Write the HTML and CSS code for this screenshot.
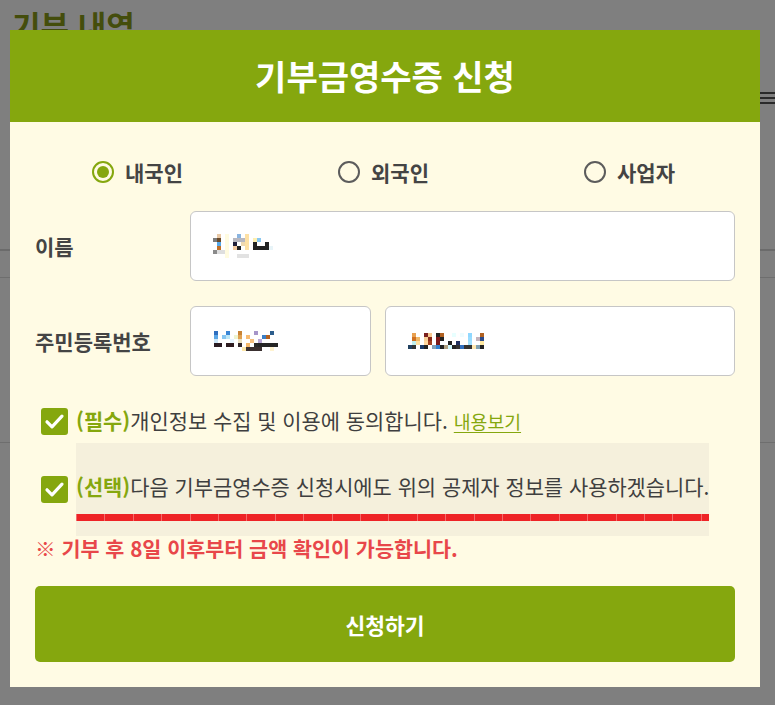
FILE: index.html
```html
<!DOCTYPE html>
<html lang="ko">
<head>
<meta charset="utf-8">
<title>기부금영수증 신청</title>
<link rel="stylesheet" href="styles.css">
</head>
<body>
<div class="page">
  <h1 class="page-title">기부 내역</h1>
  <div class="toolbar">
    <div class="menu-btn"><span></span><span></span><span></span></div>
  </div>
  <div class="rule rule-thick"></div>
  <div class="rule rule-a"></div>
  <div class="rule rule-b"></div>
</div>

<div class="overlay">
  <div class="modal">
    <header class="modal-head">
      <h2 class="modal-title">기부금영수증 신청</h2>
    </header>
    <div class="modal-body">
      <div class="radios">
        <label class="radio"><span class="radio-dot checked"></span>내국인</label>
        <label class="radio"><span class="radio-dot"></span>외국인</label>
        <label class="radio"><span class="radio-dot"></span>사업자</label>
      </div>

      <div class="form-grid">
        <div class="field-label">이름</div>
        <div class="input input-wide">
          <svg class="mosaic" width="60" height="24" viewBox="0 0 60 24">
            <rect x="0" y="4" width="4" height="4" fill="#7c7c7c"/>
            <rect x="4" y="0" width="4" height="4" fill="#e9c9a6"/>
            <rect x="4" y="4" width="4" height="4" fill="#6a4a2a"/>
            <rect x="4" y="8" width="4" height="4" fill="#56a8e8"/>
            <rect x="4" y="12" width="4" height="4" fill="#c07028"/>
            <rect x="0" y="16" width="4" height="4" fill="#8a8a8a"/>
            <rect x="4" y="16" width="8" height="4" fill="#dedede"/>
            <rect x="12" y="0" width="4" height="24" fill="#fffbe0"/>
            <rect x="20" y="4" width="12" height="4" fill="#b8b8c0"/>
            <rect x="24" y="0" width="4" height="4" fill="#8ab4e0"/>
            <rect x="20" y="8" width="4" height="4" fill="#20203a"/>
            <rect x="28" y="8" width="4" height="4" fill="#eed8b0"/>
            <rect x="20" y="12" width="4" height="4" fill="#f2caa0"/>
            <rect x="24" y="12" width="4" height="4" fill="#222"/>
            <rect x="32" y="0" width="4" height="16" fill="#fde0a4"/>
            <rect x="24" y="20" width="12" height="4" fill="#e2e2e2"/>
            <rect x="40" y="4" width="4" height="4" fill="#fff0b0"/>
            <rect x="44" y="4" width="4" height="4" fill="#8ac8f0"/>
            <rect x="40" y="8" width="4" height="8" fill="#222"/>
            <rect x="44" y="12" width="12" height="4" fill="#222"/>
            <rect x="52" y="8" width="4" height="4" fill="#222"/>
            <rect x="56" y="12" width="4" height="4" fill="#e8f4f8"/>
          </svg>
        </div>

        <div class="field-label">주민등록번호</div>
        <div class="input">
          <svg class="mosaic" width="65" height="20" viewBox="0 0 65 20">
            <rect x="1" y="0" width="4" height="4" fill="#2f6fbf"/>
            <rect x="13" y="0" width="4" height="4" fill="#3a86d6"/>
            <rect x="25" y="0" width="4" height="4" fill="#c98436"/>
            <rect x="41" y="0" width="4" height="4" fill="#a695c9"/>
            <rect x="57" y="0" width="4" height="4" fill="#2c5d8c"/>
            <rect x="1" y="4" width="4" height="4" fill="#5aa6e6"/>
            <rect x="9" y="4" width="4" height="4" fill="#86c6f2"/>
            <rect x="13" y="4" width="4" height="4" fill="#bfe8f6"/>
            <rect x="21" y="4" width="4" height="4" fill="#eef4d0"/>
            <rect x="25" y="4" width="4" height="4" fill="#e0a050"/>
            <rect x="33" y="4" width="4" height="4" fill="#f8bc74"/>
            <rect x="49" y="4" width="4" height="4" fill="#3b7fc6"/>
            <rect x="53" y="4" width="4" height="4" fill="#b4601e"/>
            <rect x="1" y="8" width="4" height="4" fill="#cfe8f8"/>
            <rect x="17" y="8" width="4" height="4" fill="#e8f6ff"/>
            <rect x="25" y="8" width="4" height="4" fill="#eae0c0"/>
            <rect x="37" y="8" width="4" height="4" fill="#f6c080"/>
            <rect x="45" y="8" width="4" height="4" fill="#b8a8d8"/>
            <rect x="1" y="12" width="8" height="4" fill="#2b1c22"/>
            <rect x="13" y="12" width="8" height="4" fill="#2e1c20"/>
            <rect x="25" y="12" width="4" height="4" fill="#30262a"/>
            <rect x="33" y="12" width="4" height="4" fill="#f5b86a"/>
            <rect x="41" y="12" width="4" height="4" fill="#2a2a2a"/>
            <rect x="45" y="12" width="20" height="4" fill="#262626"/>
            <rect x="29" y="16" width="4" height="4" fill="#fde7a8"/>
            <rect x="33" y="16" width="16" height="4" fill="#3a3030"/>
            <rect x="57" y="16" width="4" height="4" fill="#fff3d0"/>
          </svg>
        </div>
        <div class="input">
          <svg class="mosaic" width="76" height="16" viewBox="0 0 76 16">
            <rect x="4" y="0" width="4" height="4" fill="#e8a050"/>
            <rect x="16" y="0" width="4" height="4" fill="#7a2020"/>
            <rect x="20" y="0" width="4" height="4" fill="#f8c890"/>
            <rect x="28" y="0" width="4" height="4" fill="#222"/>
            <rect x="32" y="0" width="4" height="4" fill="#b06020"/>
            <rect x="44" y="0" width="4" height="4" fill="#e8ffff"/>
            <rect x="52" y="0" width="4" height="4" fill="#eefcff"/>
            <rect x="60" y="0" width="4" height="4" fill="#90d8ff"/>
            <rect x="72" y="0" width="4" height="4" fill="#b06020"/>
            <rect x="4" y="4" width="4" height="4" fill="#d07020"/>
            <rect x="8" y="4" width="4" height="4" fill="#f0b868"/>
            <rect x="16" y="4" width="4" height="4" fill="#f8d098"/>
            <rect x="20" y="4" width="4" height="4" fill="#8a2a1a"/>
            <rect x="28" y="4" width="4" height="4" fill="#801818"/>
            <rect x="32" y="4" width="4" height="4" fill="#222"/>
            <rect x="60" y="4" width="4" height="4" fill="#98dcff"/>
            <rect x="68" y="4" width="4" height="4" fill="#c4b4bc"/>
            <rect x="72" y="4" width="4" height="4" fill="#2a4a8a"/>
            <rect x="4" y="8" width="4" height="4" fill="#c0f0f0"/>
            <rect x="8" y="8" width="4" height="4" fill="#ffe0a0"/>
            <rect x="16" y="8" width="4" height="4" fill="#ffd8a0"/>
            <rect x="20" y="8" width="4" height="4" fill="#a04020"/>
            <rect x="28" y="8" width="4" height="4" fill="#7a1a1a"/>
            <rect x="40" y="8" width="4" height="4" fill="#222"/>
            <rect x="48" y="8" width="4" height="4" fill="#203060"/>
            <rect x="60" y="8" width="4" height="4" fill="#a0e0ff"/>
            <rect x="72" y="8" width="4" height="4" fill="#ffe8a0"/>
            <rect x="0" y="12" width="4" height="4" fill="#204060"/>
            <rect x="4" y="12" width="4" height="4" fill="#333"/>
            <rect x="12" y="12" width="4" height="4" fill="#1a3a6a"/>
            <rect x="16" y="12" width="4" height="4" fill="#222"/>
            <rect x="24" y="12" width="4" height="4" fill="#80a0b8"/>
            <rect x="28" y="12" width="4" height="4" fill="#3080d0"/>
            <rect x="32" y="12" width="4" height="4" fill="#222"/>
            <rect x="36" y="12" width="4" height="4" fill="#b0a080"/>
            <rect x="40" y="12" width="4" height="4" fill="#d0f8ff"/>
            <rect x="44" y="12" width="4" height="4" fill="#222"/>
            <rect x="48" y="12" width="4" height="4" fill="#333"/>
            <rect x="52" y="12" width="4" height="4" fill="#3070c0"/>
            <rect x="56" y="12" width="8" height="4" fill="#333"/>
            <rect x="64" y="12" width="4" height="4" fill="#ffe8b0"/>
            <rect x="68" y="12" width="4" height="4" fill="#80a0b0"/>
            <rect x="72" y="12" width="4" height="4" fill="#222"/>
          </svg>
        </div>
      </div>

      <div class="agree">
        <span class="checkbox">
          <svg width="27" height="27" viewBox="0 0 27 27"><path d="M6 13.8 L11 18.8 L21 8.2" fill="none" stroke="#fff" stroke-width="3.2" stroke-linecap="round" stroke-linejoin="round"/></svg>
        </span>
        <span class="agree-text"><b class="tag">(필수)</b>개인정보 수집 및 이용에 동의합니다.<a class="view-link" href="#">내용보기</a></span>
      </div>

      <div class="agree agree-opt">
        <span class="checkbox">
          <svg width="27" height="27" viewBox="0 0 27 27"><path d="M6 13.8 L11 18.8 L21 8.2" fill="none" stroke="#fff" stroke-width="3.2" stroke-linecap="round" stroke-linejoin="round"/></svg>
        </span>
        <span class="highlight">
          <span class="agree-text"><b class="tag">(선택)</b>다음 기부금영수증 신청시에도 위의 공제자 정보를 사용하겠습니다.</span>
          <span class="marker"></span>
        </span>
      </div>

      <p class="notice">※ 기부 후 8일 이후부터 금액 확인이 가능합니다.</p>

      <button class="submit" type="button">신청하기</button>
    </div>
  </div>
</div>
</body>
</html>
```

FILE: styles.css
```css
* { box-sizing: border-box; }

html, body {
  margin: 0;
  padding: 0;
}

body {
  width: 775px;
  height: 705px;
  overflow: hidden;
  background: #ffffff;
  font-family: "Noto Sans CJK KR", "Noto Sans", sans-serif;
}

/* page underneath the dialog */
.page {
  padding-top: 7px;
}

.page-title {
  margin: 0 0 0 12px;
  font-size: 31px;
  line-height: 36px;
  font-weight: 700;
  color: #889a18;
}

.toolbar {
  display: flex;
  justify-content: flex-end;
  margin-top: 49px;
}

.menu-btn {
  width: 24px;
  display: flex;
  flex-direction: column;
  gap: 3px;
}

.menu-btn span {
  display: block;
  height: 2px;
  background: #555555;
}

.rule { background: #dcdcdc; }
.rule-thick { height: 2px; margin-top: 145px; background: #d6d6d6; }
.rule-a { height: 1px; margin-top: 26px; }
.rule-b { height: 1px; margin-top: 164px; }

/* dialog */
.overlay {
  position: fixed;
  inset: 0;
  background: rgba(0, 0, 0, 0.5);
  padding: 30px 15px 0 10px;
}

.modal {
  width: 750px;
  background: #fffbe4;
}

.modal-head {
  height: 92px;
  display: flex;
  align-items: center;
  justify-content: center;
  background: #85a70e;
}

.modal-title {
  margin: 0;
  font-size: 34px;
  line-height: 1;
  font-weight: 700;
  color: #ffffff;
}

.modal-body {
  padding: 30px 25px 25px;
}

.radios {
  height: 40px;
  display: flex;
  align-items: center;
  justify-content: space-between;
  padding: 0 60px 0 57px;
}

.radio {
  display: flex;
  align-items: center;
  gap: 11px;
  font-size: 21px;
  line-height: 24px;
  font-weight: 700;
  color: #444444;
}

.radio-dot {
  width: 22px;
  height: 22px;
  border: 2px solid #5c5c5c;
  border-radius: 50%;
  display: flex;
  align-items: center;
  justify-content: center;
}

.radio-dot.checked {
  border-color: #85a70e;
}

.radio-dot.checked::after {
  content: "";
  width: 12px;
  height: 12px;
  border-radius: 50%;
  background: #85a70e;
}

.form-grid {
  margin-top: 19px;
  display: grid;
  grid-template-columns: 141px 181px 1fr;
  grid-auto-rows: 70px;
  column-gap: 14px;
  row-gap: 25px;
}

.field-label {
  align-self: center;
  font-size: 21px;
  line-height: 24px;
  font-weight: 700;
  color: #444444;
}

.input {
  display: flex;
  align-items: center;
  padding-left: 22px;
  background: #ffffff;
  border: 1px solid #c6c6c6;
  border-radius: 6px;
}

.input-wide {
  grid-column: 2 / 4;
}

.mosaic { display: block; }

.agree {
  margin-top: 31px;
  padding-left: 6px;
  display: flex;
  align-items: center;
  gap: 8px;
}

.agree-opt {
  margin-top: 8px;
}

.checkbox {
  flex: none;
  width: 27px;
  height: 27px;
  border-radius: 3px;
  background: #85a70e;
}

.checkbox svg { display: block; }

.agree-text {
  font-size: 20.9px;
  line-height: 27px;
  color: #3f3f3f;
  white-space: nowrap;
}

.tag {
  font-weight: 700;
  color: #85a70e;
}

.view-link {
  margin-left: 6px;
  font-size: 18.3px;
  line-height: 27px;
  color: #85a70e;
  text-decoration: underline;
  text-underline-offset: 3px;
}

.highlight {
  display: flex;
  flex-direction: column;
  padding: 30px 0 15px;
  background: #f5f0dc;
}

.marker {
  display: block;
  height: 7px;
  margin-top: 14px;
  background: repeating-linear-gradient(90deg, #f36b6b 0 1px, #ee2326 1px 28.4px);
}

.notice {
  margin: 0;
  font-size: 20.7px;
  line-height: 24px;
  font-weight: 700;
  color: #e8474a;
}

.submit {
  display: flex;
  align-items: center;
  justify-content: center;
  width: 100%;
  height: 76px;
  margin-top: 26px;
  border: 0;
  border-radius: 5px;
  background: #85a70e;
  font-family: inherit;
  font-size: 21.5px;
  font-weight: 700;
  color: #ffffff;
}
```
